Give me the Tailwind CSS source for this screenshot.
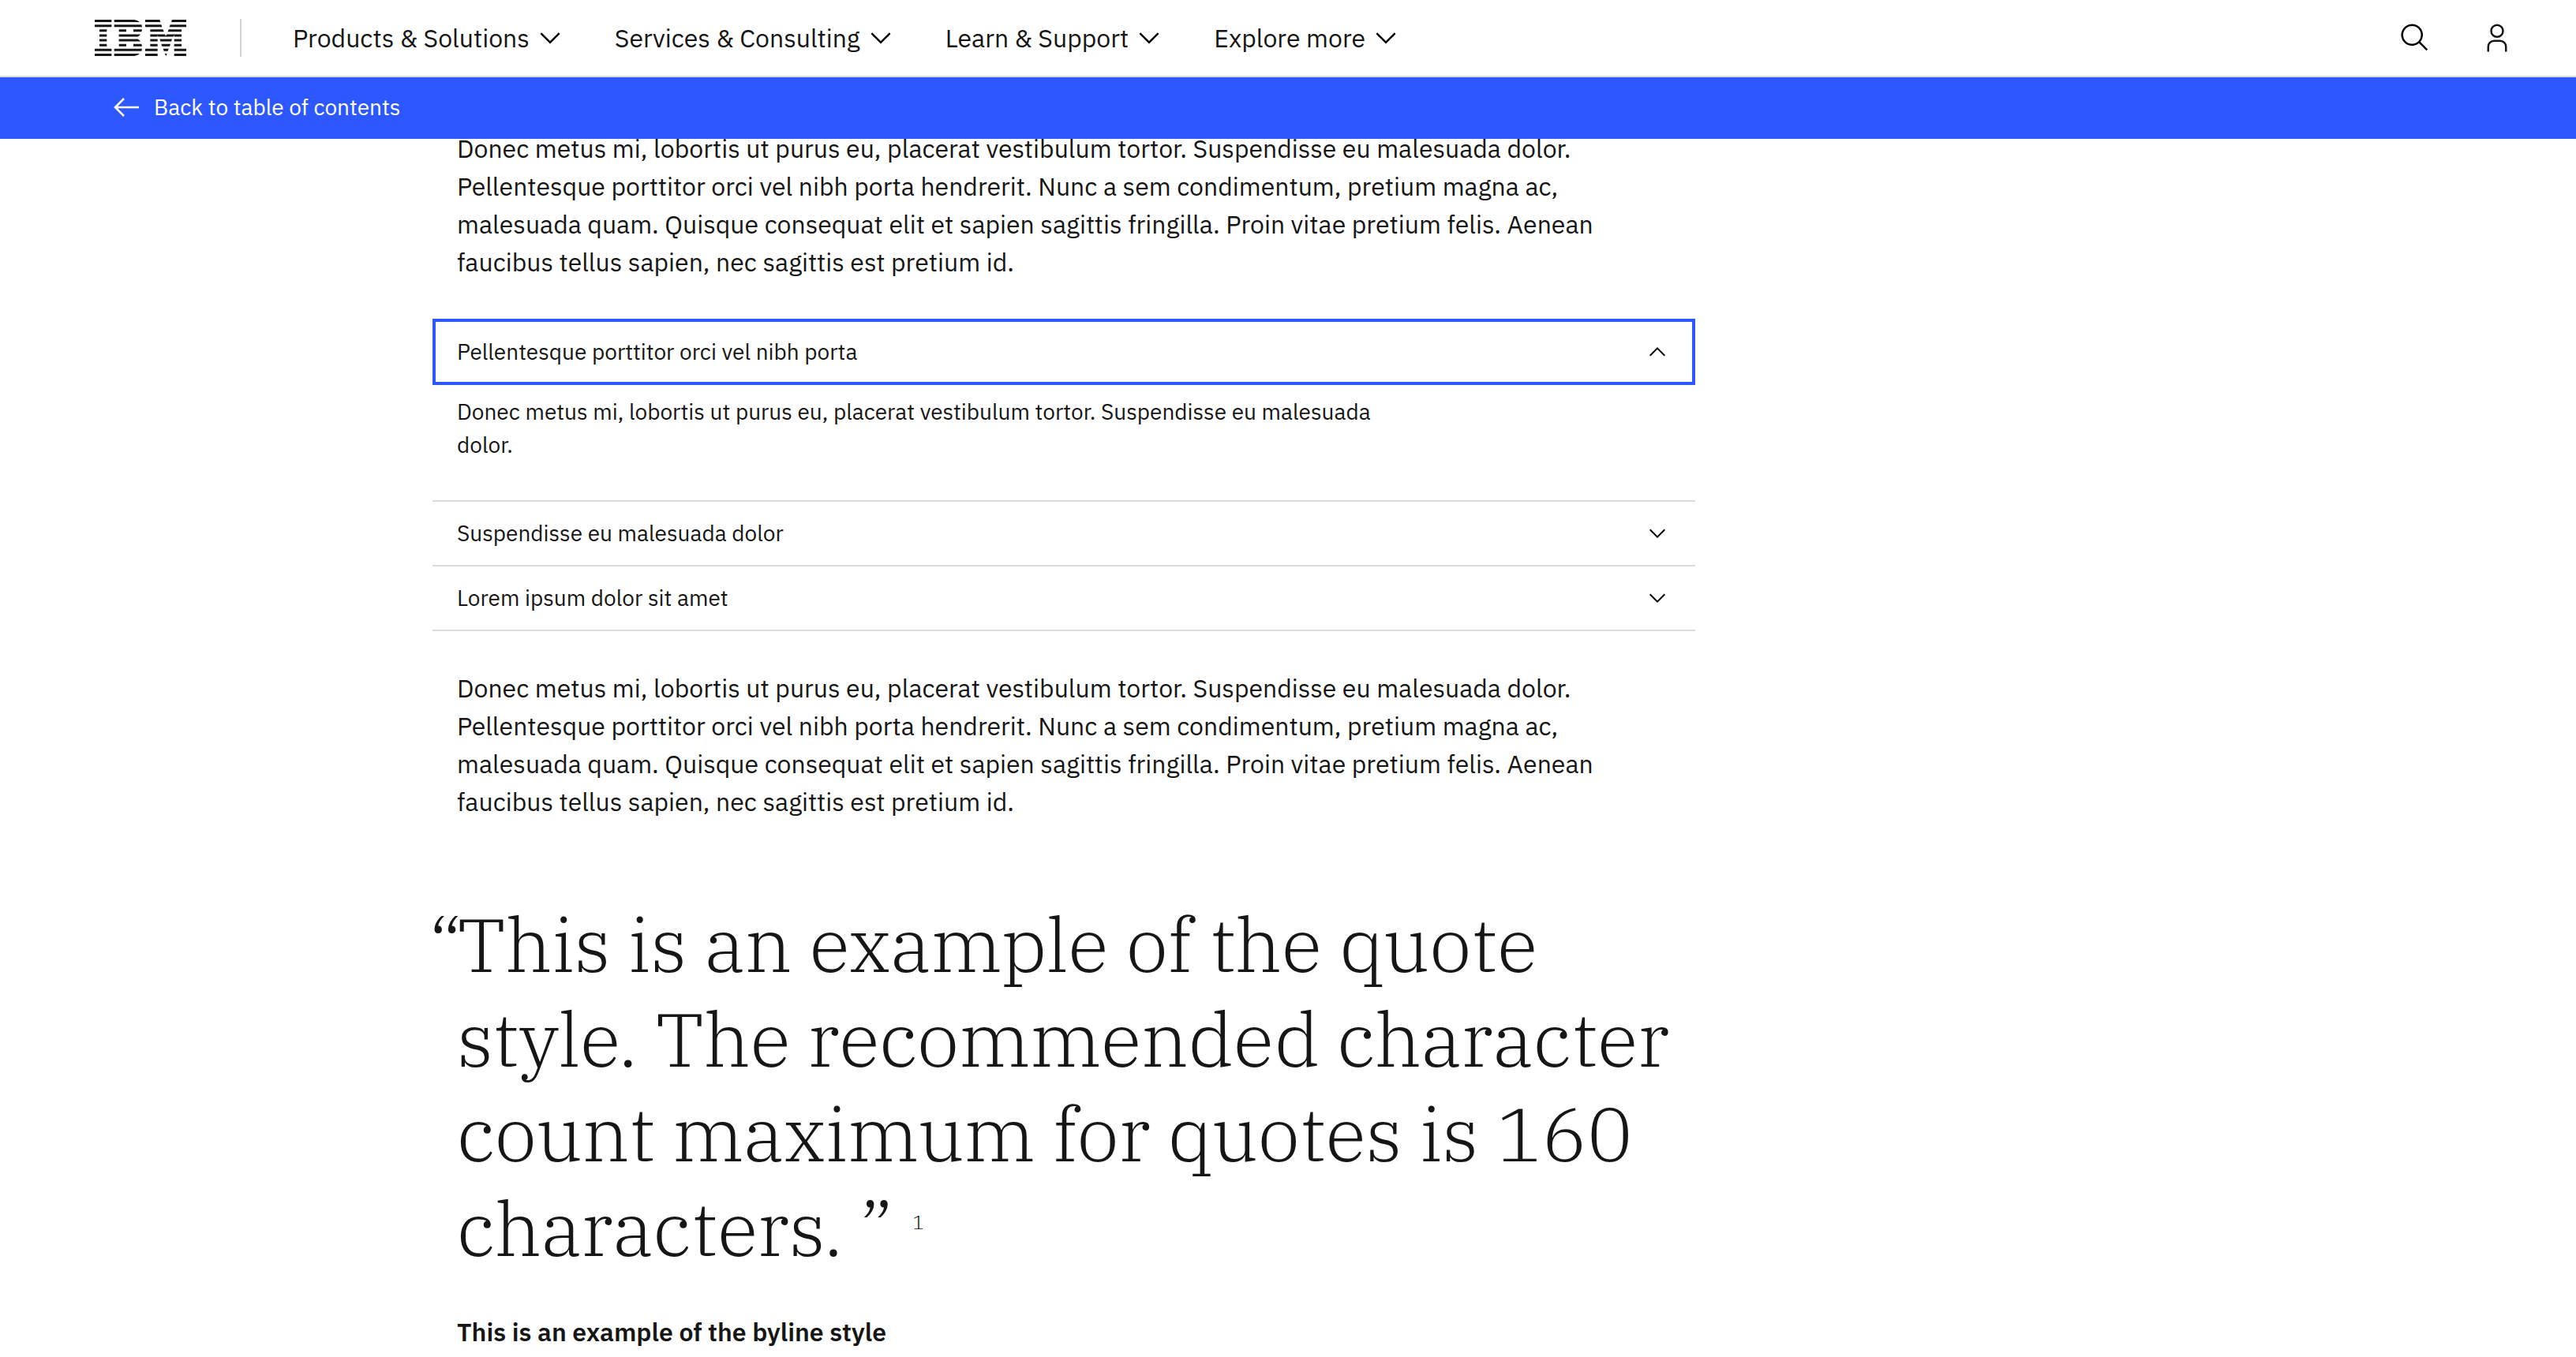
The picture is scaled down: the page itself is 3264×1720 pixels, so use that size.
<!DOCTYPE html>
<html lang="en">
<head>
<meta charset="utf-8">
<meta name="viewport" content="width=device-width, initial-scale=1">
<title>Table of contents article</title>
<script src="https://cdn.jsdelivr.net/npm/@tailwindcss/browser@4"></script>
</head>
<body class="h-screen overflow-hidden bg-white font-['IBM_Plex_Sans',Roboto,sans-serif] text-[32px] leading-12 text-[#161616]">
<svg class="hidden">
  <symbol id="chevron-down" viewBox="0 0 32 32"><path d="M16 22 6 12l1.4-1.4 8.6 8.6 8.6-8.6L26 12z"/></symbol>
  <symbol id="chevron-up" viewBox="0 0 32 32"><path d="m16 10 10 10-1.4 1.4-8.6-8.6-8.6 8.6L6 20z"/></symbol>
</svg>
<div class="flex h-full flex-col">
  <header class="relative z-10 bg-white">
    <div class="flex h-[98px] items-center border-b-2 border-[#dcdcdc] pl-30 pr-20">
      <a href="#" aria-label="IBM" class="shrink-0">
        <svg class="h-[46px] w-[116px]" viewBox="0 0 348 138" fill="#161616">
          <path d="M0 0h64v9H0zM0 18.400h64v9H0zM18 36.900h28v9H18zM18 55.300h28v9H18zM18 73.700h28v9H18zM18 92.100h28v9H18zM0 110.600h64v9H0zM0 129h64v9H0z"/>
          <path d="M74 0h76q13 1 21 9H74zM74 18.400h104l2 9H74zM92 36.900h28v9H92zM147 36.900h33l-2 9h-31zM92 55.300h82q-3 5-10 9H92zM92 73.700h72q7 4 10 9H92zM92 92.100h28v9H92zM147 92.100h31l2 9h-33zM74 110.600h106l-2 9H74zM74 129h97q-8 8-21 9H74z"/>
          <path d="M192 0h55l3 9h-58zM294 0h54v9h-57zM192 18.400h61l3 9h-64zM287 18.400h61v9h-64zM211 36.900h49l3 9h-52zM281 36.900h49v9h-52zM211 55.300h56l3 7 4-7h56v9h-28v-7l-3 7h-58l-2-7v7h-28zM211 73.700h28v9h-28zM247 73.700h47l-3 9h-41zM302 73.700h28v9h-28zM211 92.100h28v9h-28zM253 92.100h35l-3 9h-29zM302 92.100h28v9h-28zM192 110.600h47v9h-47zM260 110.600h21l-3 9h-15zM302 110.600h46v9h-46zM192 129h47v9h-47zM266 129h9l-4 9zM302 129h46v9h-46z"/>
        </svg>
      </a>
      <div class="ml-17 h-12 w-0.5 shrink-0 bg-[#d4d4d4]"></div>
      <nav class="ml-[65px] flex items-center gap-[62px]">
        <button class="flex items-center gap-1.5">Products &amp; Solutions<svg class="size-10"><use href="#chevron-down"/></svg></button>
        <button class="flex items-center gap-1.5">Services &amp; Consulting<svg class="size-10"><use href="#chevron-down"/></svg></button>
        <button class="flex items-center gap-1.5">Learn &amp; Support<svg class="size-10"><use href="#chevron-down"/></svg></button>
        <button class="flex items-center gap-1.5">Explore more<svg class="size-10"><use href="#chevron-down"/></svg></button>
      </nav>
      <div class="ml-auto flex items-center gap-16">
        <button aria-label="Search"><svg class="block size-10" viewBox="0 0 32 32" fill="#000"><path d="m29 27.586-7.552-7.552a11.018 11.018 0 1 0-1.414 1.414L27.586 29ZM4 13a9 9 0 1 1 9 9 9.010 9.010 0 0 1-9-9Z"/></svg></button>
        <button aria-label="Account"><svg class="block size-10" viewBox="0 0 32 32" fill="#161616"><path d="M16 4a5 5 0 1 1-5 5 5 5 0 0 1 5-5m0-2a7 7 0 1 0 7 7A7 7 0 0 0 16 2zM26 30h-2v-5a5 5 0 0 0-5-5h-6a5 5 0 0 0-5 5v5H6v-5a7 7 0 0 1 7-7h6a7 7 0 0 1 7 7z"/></svg></button>
      </div>
    </div>
    <a href="#" class="flex h-[78px] items-center gap-4 bg-[#2d58ff] pb-0.5 pl-[139px] text-[28px] text-white">
      <svg class="size-10" viewBox="0 0 40 40" fill="none" stroke="currentColor" stroke-width="2.500"><path d="M18 9 7 20l11 11M6 20h31"/></svg>
      Back to table of contents
    </a>
  </header>
  <main class="ml-[548px] flex max-w-[1600px] flex-col">
    <p class="-mt-3 pr-8 pl-[31px]">Donec metus mi, lobortis ut purus eu, placerat vestibulum tortor. Suspendisse eu malesuada dolor. Pellentesque porttitor orci vel nibh porta hendrerit. Nunc a sem condimentum, pretium magna ac, malesuada quam. Quisque consequat elit et sapien sagittis fringilla. Proin vitae pretium felis. Aenean faucibus tellus sapien, nec sagittis est pretium id.</p>
    <div class="mt-12 border-b-2 border-[#dcdcdc] text-[28px] leading-[42px]">
      <section>
        <button aria-expanded="true" aria-controls="panel-1" class="flex h-[84px] w-full items-center justify-between pr-8 pl-[31px] text-left outline-4 -outline-offset-4 outline-[#2d58ff]">Pellentesque porttitor orci vel nibh porta<svg class="size-8"><use href="#chevron-up"/></svg></button>
        <p id="panel-1" class="max-w-[1264px] pt-[13px] pr-8 pb-[49px] pl-[31px]">Donec metus mi, lobortis ut purus eu, placerat vestibulum tortor. Suspendisse eu malesuada dolor.</p>
      </section>
      <button aria-expanded="false" class="flex h-[82px] w-full items-center justify-between border-t-2 border-[#dcdcdc] pr-8 pl-[31px] text-left">Suspendisse eu malesuada dolor<svg class="size-8"><use href="#chevron-down"/></svg></button>
      <button aria-expanded="false" class="flex h-[82px] w-full items-center justify-between border-t-2 border-[#dcdcdc] pr-8 pl-[31px] text-left">Lorem ipsum dolor sit amet<svg class="size-8"><use href="#chevron-down"/></svg></button>
    </div>
    <p class="mt-12 pr-8 pl-[31px]">Donec metus mi, lobortis ut purus eu, placerat vestibulum tortor. Suspendisse eu malesuada dolor. Pellentesque porttitor orci vel nibh porta hendrerit. Nunc a sem condimentum, pretium magna ac, malesuada quam. Quisque consequat elit et sapien sagittis fringilla. Proin vitae pretium felis. Aenean faucibus tellus sapien, nec sagittis est pretium id.</p>
    <figure class="mt-24 pl-[31px]">
      <blockquote class="relative font-['IBM_Plex_Serif','DejaVu_Serif_Condensed',serif] text-[96px] leading-[120px] font-light"><span class="absolute top-0 -left-9">“</span>This is an example of the quote style. The recommended character count maximum for quotes is 160 characters. ”<a href="#" class="ml-6 align-[34px] text-2xl leading-none">1</a></blockquote>
      <figcaption class="mt-12 font-semibold">This is an example of the byline style</figcaption>
    </figure>
  </main>
</div>
</body>
</html>
